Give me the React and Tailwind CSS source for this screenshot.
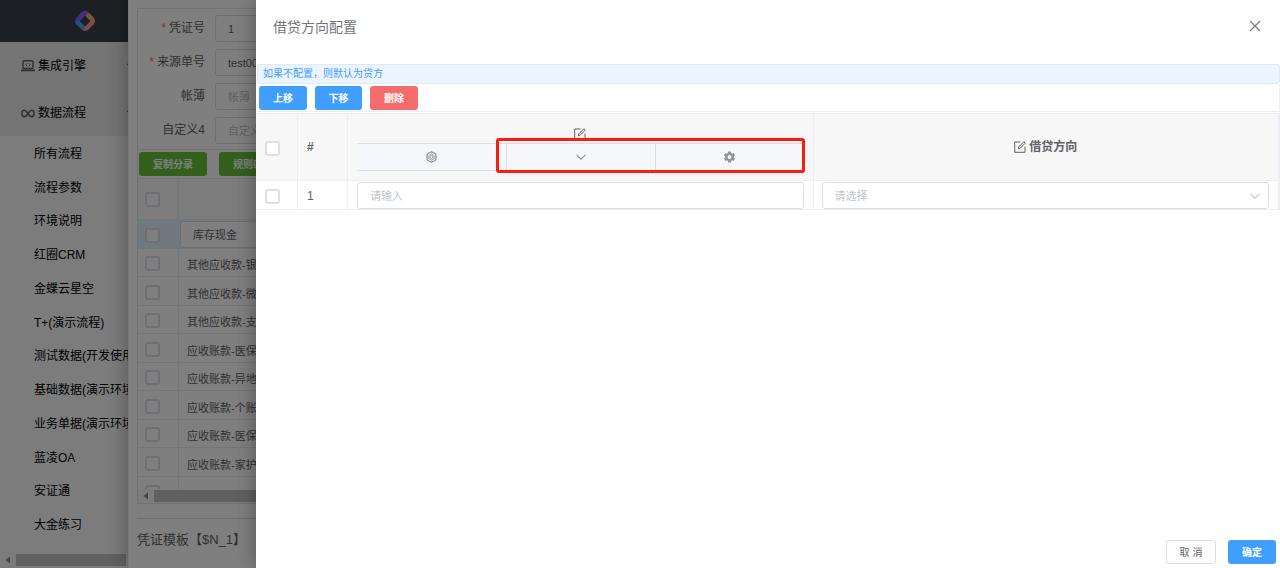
import React, { useState } from 'react';

const SUB_MENUS = [
  '所有流程',
  '流程参数',
  '环境说明',
  '红圈CRM',
  '金蝶云星空',
  'T+(演示流程)',
  '测试数据(开发使用)',
  '基础数据(演示环境)',
  '业务单据(演示环境)',
  '蓝凌OA',
  '安证通',
  '大金练习',
];

const FORM_FIELDS = [
  { id: 'voucherNo', label: '凭证号', value: '1', required: true },
  { id: 'sourceNo', label: '来源单号', value: 'test001', required: true },
  { id: 'book', label: '帐薄', value: '', required: false },
  { id: 'custom4', label: '自定义4', value: '', required: false },
];

const SUBJECTS = [
  '其他应收款-银行',
  '其他应收款-微信',
  '其他应收款-支付宝',
  '应收账款-医保',
  '应收账款-异地医保',
  '应收账款-个账',
  '应收账款-医保统筹',
  '应收账款-家护',
];

const Logo = () => (
  <svg className="w-[22px] h-[22px]" viewBox="0 0 22 22" fill="none" strokeWidth="4.6" strokeLinecap="round" strokeLinejoin="round">
    <path d="M3.4 12.5 Q2.8 11 4 9.6 L8.6 4.6" stroke="#4f7df5" />
    <path d="M6.4 7 L9 4.2 Q11 2.4 13 4 L14.6 5.4" stroke="#8f5cf0" />
    <path d="M14.4 5.6 L17.8 9 Q19.4 11 17.8 13" stroke="#f5ab62" />
    <path d="M17.6 13.2 L13 17.8 Q11 19.4 9 17.8" stroke="#f792a4" />
    <path d="M8.6 17.2 L4.2 13" stroke="#46a6ee" />
  </svg>
);

const LaptopIcon = () => (
  <svg className="w-3.5 h-3.5" viewBox="0 0 14 14" fill="none" stroke="currentColor" strokeWidth="1.4">
    <rect x="2" y="1.7" width="10" height="7.8" rx="1" />
    <path d="M0 11.4 H14" strokeWidth="1.8" />
    <path d="M6 4.3 L4.8 5.7 L6 7.1 M8 4.3 L9.2 5.7 L8 7.1" strokeWidth="1" />
  </svg>
);

const InfinityIcon = () => (
  <svg className="w-3.5 h-3.5" viewBox="0 0 14 14" fill="none" stroke="currentColor" strokeWidth="1.5">
    <path d="M7 7.5 C5.8 5.6 4.9 4.3 3.5 4.3 C1.9 4.3 0.9 5.7 0.9 7.5 C0.9 9.3 1.9 10.7 3.5 10.7 C4.9 10.7 5.8 9.4 7 7.5 C8.2 5.6 9.1 4.3 10.5 4.3 C12.1 4.3 13.1 5.7 13.1 7.5 C13.1 9.3 12.1 10.7 10.5 10.7 C9.1 10.7 8.2 9.4 7 7.5 Z" />
  </svg>
);

const ArrowDown = ({ className }) => (
  <svg className={className} viewBox="0 0 12 12" fill="none" stroke="currentColor" strokeWidth="1.1">
    <path d="M1.5 3.8 L6 8.2 L10.5 3.8" />
  </svg>
);

const CloseIcon = () => (
  <svg className="w-3 h-3" viewBox="0 0 12 12" fill="none" stroke="currentColor" strokeWidth="1.1">
    <path d="M1 1 L11 11 M11 1 L1 11" />
  </svg>
);

const EditIcon = ({ className }) => (
  <svg className={className} viewBox="0 0 12 12" fill="none" stroke="currentColor" strokeWidth="1">
    <path d="M6.5 1 H0.7 V11.3 H11 V5.5" />
    <path d="M4.3 7.8 L4.8 5.8 L9.8 0.8 L11.2 2.2 L6.2 7.2 Z" />
  </svg>
);

const SettingIcon = () => (
  <svg className="w-[11px] h-3" viewBox="0 0 11 12" fill="none" stroke="currentColor">
    <path
      strokeWidth="1.2"
      d="M4.3 1.6 L5.5 0.7 L6.7 1.6 L8.4 2 L9.9 3.2 L9.7 4.9 L10.3 6 L9.7 7.1 L9.9 8.8 L8.4 10 L6.7 10.4 L5.5 11.3 L4.3 10.4 L2.6 10 L1.1 8.8 L1.3 7.1 L0.7 6 L1.3 4.9 L1.1 3.2 L2.6 2 Z"
    />
    <path strokeWidth="0.8" d="M5.5 2.9 L8.2 4.4 V7.6 L5.5 9.1 L2.8 7.6 V4.4 Z" />
    <circle cx="5.5" cy="6" r="1.5" strokeWidth="1" />
  </svg>
);

const ToolsIcon = () => (
  <svg className="w-[11px] h-3" viewBox="0 0 11 12" fill="currentColor">
    <path
      fillRule="evenodd"
      d="M4.1 0.5 H6.9 L7.3 2.2 L8.2 2.7 L9.7 2.1 L11 4.4 L9.8 5.4 V6.6 L11 7.6 L9.7 9.9 L8.2 9.3 L7.3 9.8 L6.9 11.5 H4.1 L3.7 9.8 L2.8 9.3 L1.3 9.9 L0 7.6 L1.2 6.6 V5.4 L0 4.4 L1.3 2.1 L2.8 2.7 L3.7 2.2 Z M5.5 4 A2 2 0 1 0 5.5 8 A2 2 0 1 0 5.5 4 Z"
    />
  </svg>
);

const Checkbox = ({ label }) => (
  <input
    type="checkbox"
    aria-label={label}
    className="block appearance-none w-[15px] h-[15px] border-2 border-[#dcdfe6] rounded-[3px] bg-white checked:bg-[#409eff]"
  />
);

const HorizontalScroll = ({ className }) => (
  <div className={`flex items-center ${className}`}>
    <svg className="w-4 h-2 shrink-0" viewBox="0 0 16 8" fill="#8a8a8a">
      <path d="M10 0.5 V7.5 L5.5 4 Z" />
    </svg>
    <div className="flex-1 h-3 bg-[#c1c1c1]" />
  </div>
);

const Sidebar = () => (
  <aside className="w-1/10 shrink-0 h-full flex flex-col bg-[#f8f8f8] text-xs text-black whitespace-nowrap overflow-hidden">
    <div className="h-[42px] shrink-0 bg-[#384148] flex justify-center items-center pl-[42px]">
      <Logo />
    </div>
    <nav className="flex-1 flex flex-col">
      <div className="bg-[#e8e8e8]">
        <a href="#engine" className="h-[47px] flex items-center pl-[21px]">
          <span className="text-[#606060]"><LaptopIcon /></span>
          <span className="ml-[3px]">集成引擎</span>
          <ArrowDown className="w-3 h-3 ml-10 shrink-0" />
        </a>
        <a href="#flow" className="h-[47px] flex items-center pl-[21px]">
          <span className="text-[#606060]"><InfinityIcon /></span>
          <span className="ml-[3px]">数据流程</span>
          <ArrowDown className="w-3 h-3 ml-10 shrink-0" />
        </a>
      </div>
      <ul className="flex-1 flex flex-col pt-px pb-2.5">
        {SUB_MENUS.map(name => (
          <li key={name} className="flex-1 flex items-center pl-[34px]">
            <a href="#menu">{name}</a>
          </li>
        ))}
      </ul>
    </nav>
    <HorizontalScroll className="h-4 mr-0.5 shrink-0" />
  </aside>
);

const VoucherPage = () => (
  <main className="flex-1 min-w-0 h-full bg-white border-l border-[#f0f0f0] pl-2 pt-2 overflow-hidden text-[11px] text-[#606266] whitespace-nowrap shadow-[0_0_18px_rgba(0,0,0,0.35)]">
    <div className="border border-[#e4e7ed]">
      <form className="flex flex-col gap-[7px] pt-1.5 pb-[5px]">
        {FORM_FIELDS.map(field => (
          <div key={field.id} className="flex items-center">
            <label htmlFor={field.id} className="w-[67px] pb-0.5 text-right text-xs">
              {field.required && <span className="text-[#f56c6c] mr-[3px]">*</span>}
              {field.label}
            </label>
            <input
              id={field.id}
              defaultValue={field.value}
              placeholder={field.label}
              className="ml-2.5 w-60 h-[27px] border border-[#dcdfe6] rounded-[3px] px-3 placeholder:text-[#c0c4cc] outline-none"
            />
          </div>
        ))}
      </form>
      <div className="flex gap-3 pl-px py-0.5 border-y border-[#e4e7ed] text-[10px] font-bold text-white">
        <button className="w-[68px] h-6 rounded-[3px] bg-[#67c23a]">复制分录</button>
        <button className="w-[68px] h-6 rounded-[3px] bg-[#67c23a]">规则匹配</button>
      </div>
      <div className="h-[310px] overflow-hidden">
        <table className="w-full table-fixed border-separate border-spacing-0">
          <thead>
            <tr className="h-[41px] bg-[#f8f8f9]">
              <th className="w-[41px] pl-[7px] border-r border-b border-[#e8eaec]"><Checkbox label="全选分录" /></th>
              <th className="border-b border-[#e8eaec]" />
            </tr>
          </thead>
          <tbody>
            <tr className="h-[29px] bg-[#dff2fc]">
              <td className="pl-[7px] pt-0.5 border-r border-b border-[#e8eaec]"><Checkbox label="库存现金" /></td>
              <td className="pl-px border-b border-[#e8eaec]">
                <input
                  aria-label="科目"
                  defaultValue="库存现金"
                  className="block w-60 h-[27px] border border-[#dcdfe6] rounded-[3px] bg-white px-3 outline-none"
                />
              </td>
            </tr>
            {SUBJECTS.map(name => (
              <tr key={name} className="odd:h-[29px] even:h-7">
                <td className="pl-[7px] pt-0.5 border-r border-b border-[#e8eaec]"><Checkbox label={name} /></td>
                <td className="pl-2 pt-1.5 border-b border-[#e8eaec]">{name}</td>
              </tr>
            ))}
            <tr className="h-[29px]">
              <td className="pl-[7px] pt-0.5 border-r border-[#e8eaec]"><Checkbox label="下一行" /></td>
              <td />
            </tr>
          </tbody>
        </table>
      </div>
      <HorizontalScroll className="h-3.5 bg-[#f8f8f8]" />
    </div>
    <div className="mt-3.5 pt-[11px] border-t border-[#dcdfe6] text-[13px]">凭证模板【$N_1】</div>
  </main>
);

const DirectionTable = () => {
  const [direction, setDirection] = useState('');

  return (
    <table className="w-full mt-px table-fixed border-separate border-spacing-0 border-t border-r border-[#ebeef5] text-xs text-[#606266]">
      <thead>
        <tr className="h-[67px] bg-[#f7f7f7]">
          <th className="w-[42px] pl-[9px] pt-0.5 border-r border-b border-[#ebeef5]"><Checkbox label="全选" /></th>
          <th className="w-[50px] pl-[9px] text-left border-r border-b border-[#ebeef5]">#</th>
          <th className="px-[9px] pt-[5px] border-r border-b border-[#ebeef5]">
            <div className="h-[11px] overflow-hidden flex justify-center">
              <EditIcon className="w-3 h-3 shrink-0" />
            </div>
            <div className="mt-1 h-7 flex bg-[#f5f7fa] text-[#909399]">
              <button aria-label="设置" className="flex-1 flex justify-center items-center border-y border-[#dcdfe6]">
                <SettingIcon />
              </button>
              <div className="flex-2 relative flex">
                <button aria-label="展开" className="flex-1 flex justify-center items-center border border-[#dcdfe6]">
                  <ArrowDown className="w-3 h-3" />
                </button>
                <button aria-label="工具" className="flex-1 flex justify-center items-center border-y border-[#dcdfe6]">
                  <ToolsIcon />
                </button>
                <div className="absolute -top-[5px] -bottom-0.5 -left-2.5 -right-px border-3 border-[#fd1b10] rounded-[3px] pointer-events-none" />
              </div>
            </div>
          </th>
          <th className="border-r border-b border-[#ebeef5]">
            <div className="flex justify-center items-center gap-[3px]">
              <EditIcon className="w-3 h-3" />
              借贷方向
            </div>
          </th>
        </tr>
      </thead>
      <tbody>
        <tr className="h-[29px]">
          <td className="pl-[9px] pt-0.5 border-r border-b border-[#ebeef5]"><Checkbox label="选择第1行" /></td>
          <td className="pl-[9px] pt-0.5 border-r border-b border-[#ebeef5]">1</td>
          <td className="px-[9px] pt-px border-r border-b border-[#ebeef5]">
            <input
              aria-label="条件"
              placeholder="请输入"
              className="block w-full h-[27px] border border-[#dcdfe6] rounded-[3px] px-3 text-[11px] placeholder:text-[#c0c4cc] outline-none"
            />
          </td>
          <td className="pl-2 pr-[9px] pt-px border-r border-b border-[#ebeef5]">
            <div className="relative">
              <select
                aria-label="借贷方向"
                value={direction}
                onChange={(e) => setDirection(e.target.value)}
                className="block appearance-none w-full h-[27px] border border-[#dcdfe6] rounded-[3px] px-3 pt-0.5 text-[11px] text-[#c0c4cc] bg-white outline-none"
              >
                <option value="">请选择</option>
                <option value="debit">借方</option>
                <option value="credit">贷方</option>
              </select>
              <ArrowDown className="absolute right-2 top-2 w-3 h-3 text-[#c0c4cc] pointer-events-none" />
            </div>
          </td>
        </tr>
      </tbody>
    </table>
  );
};

const DirectionDrawer = () => (
  <section
    role="dialog"
    aria-label="借贷方向配置"
    className="absolute inset-y-0 right-0 w-4/5 bg-white flex flex-col shadow-[0_0_20px_rgba(0,0,0,0.35)]"
  >
    <header className="h-16 shrink-0 flex justify-between pl-[17px] pr-[19px] text-[#72767b]">
      <h2 className="text-sm leading-5 pt-[17px]">借贷方向配置</h2>
      <button aria-label="关闭" className="h-[51px]">
        <CloseIcon />
      </button>
    </header>
    <div className="h-5 shrink-0 ml-px flex items-center pl-[5px] pb-0.5 border border-[#d9ecff] rounded-[3px] bg-[#ecf5ff] text-[10px] text-[#409eff]">
      如果不配置，则默认为贷方
    </div>
    <div className="flex gap-2 pl-[3px] pt-0.5 pb-px border-b border-r border-[#ebeef5] text-[10px] font-bold text-white">
      <button className="w-12 h-6 rounded-[3px] bg-[#409eff]">上移</button>
      <button className="w-[47px] h-6 rounded-[3px] bg-[#409eff]">下移</button>
      <button className="w-12 h-6 rounded-[3px] bg-[#f56c6c]">删除</button>
    </div>
    <DirectionTable />
    <footer className="mt-auto flex justify-end gap-3 pr-1 pb-1 text-[10px]">
      <button className="w-[50px] h-6 border border-[#dcdfe6] rounded-[3px] text-[#606266]">取 消</button>
      <button className="w-12 h-6 rounded-[3px] bg-[#409eff] text-white font-bold">确定</button>
    </footer>
  </section>
);

const App = () => (
  <div className="relative h-screen flex overflow-hidden bg-white font-['Liberation_Sans','Noto_Sans_CJK_SC',sans-serif]">
    <Sidebar />
    <VoucherPage />
    <div className="absolute inset-0 bg-black/50" />
    <DirectionDrawer />
  </div>
);

export default App;
